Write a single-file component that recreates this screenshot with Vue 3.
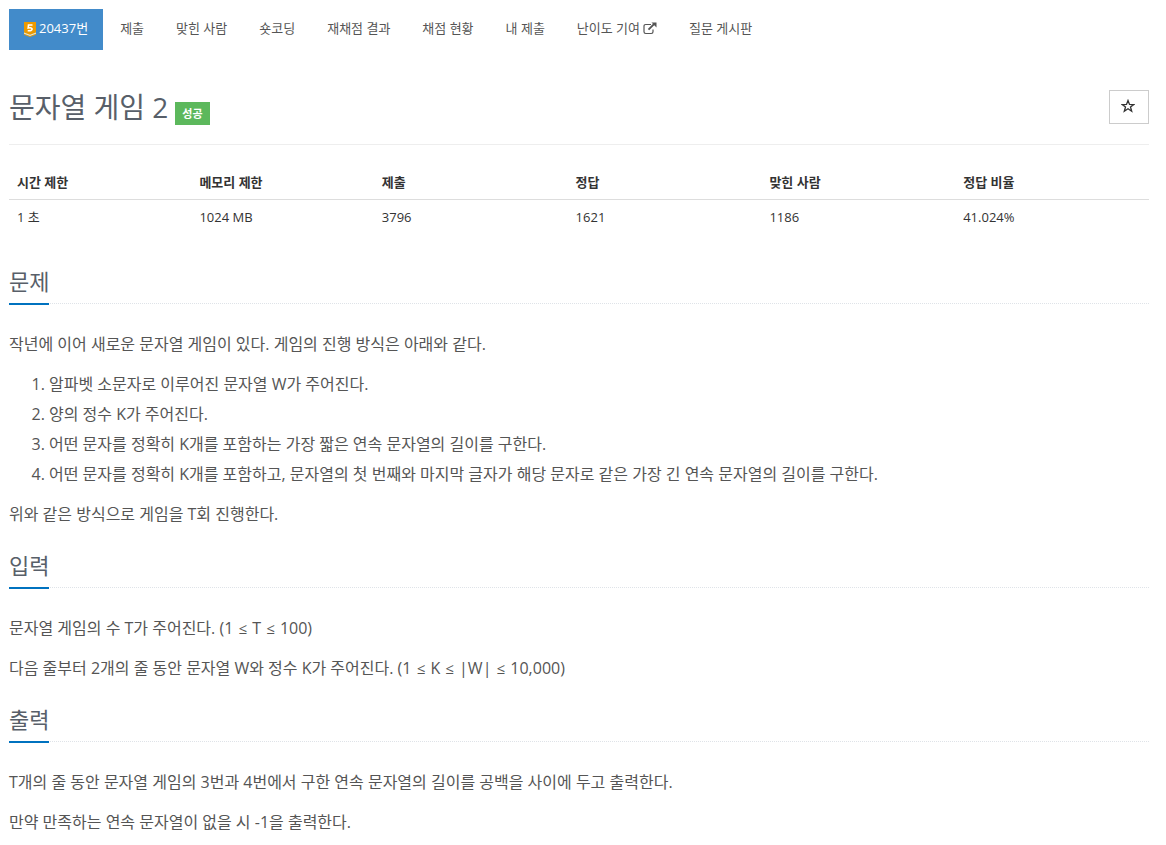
<script setup>
const tabs = ['제출', '맞힌 사람', '숏코딩', '재채점 결과', '채점 현황', '내 제출', '난이도 기여', '질문 게시판']

const stats = [
  { label: '시간 제한', value: '1 초' },
  { label: '메모리 제한', value: '1024 MB' },
  { label: '제출', value: '3796' },
  { label: '정답', value: '1621' },
  { label: '맞힌 사람', value: '1186' },
  { label: '정답 비율', value: '41.024%' },
]

const steps = [
  '알파벳 소문자로 이루어진 문자열 W가 주어진다.',
  '양의 정수 K가 주어진다.',
  '어떤 문자를 정확히 K개를 포함하는 가장 짧은 연속 문자열의 길이를 구한다.',
  '어떤 문자를 정확히 K개를 포함하고, 문자열의 첫 번째와 마지막 글자가 해당 문자로 같은 가장 긴 연속 문자열의 길이를 구한다.',
]
</script>

<template>
  <div class="page">
    <nav>
      <ul class="tabs">
        <li>
          <a class="tab active" href="#">
            <svg class="tier" viewBox="0 0 12 15" aria-hidden="true">
              <path d="M0 0h12v10.500l-6 2.500-6-2.500z" fill="#ec9a00" />
              <path d="M0 11.800v1l6 2.200 6-2.200v-1l-6 2.200z" fill="#ec9a00" />
              <path d="M0 10.500v1.300l6 2.200 6-2.200v-1.300l-6 2.300z" fill="#ffe7b0" />
              <path d="M8.500 3H4.500L4.200 6q3.900-.7 3.900 1.100Q8.100 9.200 3.700 8.700" fill="none" stroke="#fff" stroke-width="1.600" />
            </svg>
            <span>20437번</span>
          </a>
        </li>
        <li v-for="tab in tabs" :key="tab">
          <a class="tab" href="#">
            <span>{{ tab }}</span>
            <svg v-if="tab === '난이도 기여'" class="external" viewBox="0 0 14 13" aria-hidden="true">
              <path d="M8 2.500H2.700Q1 2.500 1 4.200v5.600q0 1.700 1.700 1.700h5.600q1.700 0 1.700-1.700V7.500" fill="none" stroke="currentColor" stroke-width="1.200" />
              <path d="M5.500 7.700L11.500 1.700" stroke="currentColor" stroke-width="1.900" />
              <path d="M8.500.5H13.500v5z" fill="currentColor" />
            </svg>
          </a>
        </li>
      </ul>
    </nav>

    <header class="title-bar">
      <h1>문자열 게임 2</h1>
      <span class="badge">성공</span>
      <button class="star" type="button" aria-label="즐겨찾기">
        <svg viewBox="0 0 14 14" aria-hidden="true">
          <path d="M7 1.500l1.500 3.900 4.300.1-3.300 2.500 1.200 4.200L7 9.800l-3.700 2.400 1.200-4.200-3.300-2.500 4.300-.1z" fill="none" stroke="currentColor" stroke-width="1.300" />
        </svg>
      </button>
    </header>

    <table class="stats">
      <thead>
        <tr><th v-for="s in stats" :key="s.label" scope="col">{{ s.label }}</th></tr>
      </thead>
      <tbody>
        <tr><td v-for="s in stats" :key="s.label">{{ s.value }}</td></tr>
      </tbody>
    </table>

    <section>
      <div class="headline"><h2>문제</h2></div>
      <p>작년에 이어 새로운 문자열 게임이 있다. 게임의 진행 방식은 아래와 같다.</p>
      <ol>
        <li v-for="step in steps" :key="step">{{ step }}</li>
      </ol>
      <p>위와 같은 방식으로 게임을 T회 진행한다.</p>
    </section>

    <section>
      <div class="headline"><h2>입력</h2></div>
      <p>문자열 게임의 수 T가 주어진다. (1 <span class="op">≤</span> T <span class="op">≤</span> 100)</p>
      <p>다음 줄부터 2개의 줄 동안 문자열 W와 정수 K가 주어진다. (1 <span class="op">≤</span> K <span class="op">≤</span> |W| <span class="op">≤</span> 10,000)</p>
    </section>

    <section>
      <div class="headline"><h2>출력</h2></div>
      <p>T개의 줄 동안 문자열 게임의 3번과 4번에서 구한 연속 문자열의 길이를 공백을 사이에 두고 출력한다.</p>
      <p>만약 만족하는 연속 문자열이 없을 시 -1을 출력한다.</p>
    </section>
  </div>
</template>

<style>
body {
  background: #fff;
}
</style>

<style scoped>
.page {
  padding: 9px 17px 0 9px;
  color: #333;
  font-family: "Open Sans", "Noto Sans CJK KR", sans-serif;
  font-size: 13px;
  line-height: 20px;
}
.tabs {
  display: flex;
  gap: 2px;
  margin: 0;
  padding: 0;
  list-style: none;
}
.tab {
  display: flex;
  align-items: center;
  gap: 3px;
  padding: 9px 15px 12px;
  color: #555;
  text-decoration: none;
  white-space: nowrap;
}
.active {
  background: #428bca;
  color: #fff;
}
.tier {
  width: 12px;
  height: 15px;
  margin-top: 2px;
}
.external {
  width: 14px;
  height: 13px;
}
.title-bar {
  display: flex;
  align-items: flex-end;
  gap: 7px;
  margin-top: 40px;
  padding-bottom: 19px;
  border-bottom: 1px solid #eee;
}
h1 {
  margin: 0;
  color: #585f69;
  font-size: 28px;
  font-weight: 400;
  line-height: 35px;
}
.badge {
  padding: 3px 7px;
  background: #5cb85c;
  color: #fff;
  font-size: 11px;
  font-weight: 700;
  line-height: 17px;
}
.star {
  display: flex;
  align-items: center;
  justify-content: center;
  align-self: flex-start;
  width: 40px;
  height: 34px;
  margin-left: auto;
  padding: 0 2px 2px 0;
  border: 1px solid #ccc;
  background: #fff;
  color: #333;
}
.star svg {
  width: 14px;
  height: 14px;
}
.stats {
  width: 100%;
  margin-top: 20px;
  border-collapse: collapse;
}
th,
td {
  width: 17%;
  padding: 8px;
  text-align: left;
  line-height: 18px;
}
th:nth-child(-n + 2),
td:nth-child(-n + 2) {
  width: 16%;
}
th {
  border-bottom: 1px solid #ddd;
  font-weight: 700;
}
section {
  color: #555;
  font-size: 16px;
  line-height: 30px;
}
.headline {
  display: flex;
  margin: 20px 0 25px;
  border-bottom: 1px dotted #dfe3e8;
}
.stats + section .headline {
  margin-top: 31px;
}
h2 {
  margin: 0 0 -2px;
  padding-bottom: 5px;
  border-bottom: 2px solid #0072bf;
  color: #585f69;
  font-size: 22px;
  font-weight: 400;
  line-height: 33px;
}
p,
ol {
  margin: 0 0 10px;
}
ol {
  padding-left: 40px;
}
.op {
  padding: 0 1px;
  font-size: 15px;
}
</style>
